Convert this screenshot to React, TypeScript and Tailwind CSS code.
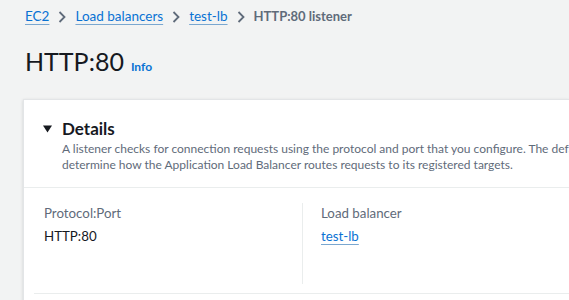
import React from "react";

const font = { fontFamily: "Lato, 'Open Sans', sans-serif" };

function Chevron() {
  return (
    <svg width="10" height="14" viewBox="0 0 10 14" className="mx-[8px]">
      <path d="M2.5 2 L7.5 7 L2.5 12" fill="none" stroke="#5f6b7a" strokeWidth="1.8" />
    </svg>
  );
}

export default function App() {
  return (
    <div className="w-[569px] h-[300px] overflow-hidden bg-[#f2f3f3] text-[#16191f]" style={font}>
      <div className="flex items-center pl-[25px] pt-[7px] h-[26px] text-[13.5px]">
        <a className="text-[#0972d3] underline decoration-[#7aa7d0] underline-offset-[3px]">EC2</a>
        <Chevron />
        <a className="text-[#0972d3] underline decoration-[#7aa7d0] underline-offset-[3px]">Load balancers</a>
        <Chevron />
        <a className="text-[#0972d3] underline decoration-[#7aa7d0] underline-offset-[3px]">test-lb</a>
        <Chevron />
        <span className="text-[#5f6b7a] font-bold text-[13px]">HTTP:80 listener</span>
      </div>
      <div className="flex items-baseline pl-[25px] mt-[17px] h-[36px]">
        <h1 className="text-[25px] leading-[36px] text-[#16191f]">HTTP:80</h1>
        <span className="ml-[7px] text-[12px] font-bold text-[#0972d3]">Info</span>
      </div>
      <div className="ml-[23px] mt-[20px] bg-white border-l border-t border-[#e3e5e7] shadow-[0_1px_3px_rgba(0,28,36,0.15)] h-[300px]">
        <div className="pl-[38px] pt-[18px] pb-[14px] border-b border-[#eaeded]">
          <div className="flex items-center">
            <svg width="9" height="8" viewBox="0 0 9 8" className="-ml-[19px] mr-[10px]">
              <path d="M0 0.5 L9 0.5 L4.5 7.5 Z" fill="#16191f" />
            </svg>
            <span className="text-[17px] font-bold leading-[22px]">Details</span>
          </div>
          <p className="text-[12px] leading-[16px] text-[#5f6b7a] whitespace-nowrap mt-[1px]">
            A listener checks for connection requests using the protocol and port that you configure. The default action and any rules that you define
            <br />
            determine how the Application Load Balancer routes requests to its registered targets.
          </p>
        </div>
        <div className="flex pt-[15px] pb-[9px] ml-[10px] border-b border-[#eaeded]">
          <div className="w-[269px] pl-[10px] h-[81px] border-r border-[#eaeded]">
            <div className="text-[13.3px] text-[#5f6b7a] leading-[20px]">Protocol:Port</div>
            <div className="text-[13.3px] text-[#16191f] leading-[20px] mt-[3px]">HTTP:80</div>
          </div>
          <div className="pl-[18px]">
            <div className="text-[13.3px] text-[#5f6b7a] leading-[20px]">Load balancer</div>
            <a className="text-[13.3px] text-[#0972d3] leading-[20px] mt-[3px] inline-block underline decoration-[#7aa7d0] underline-offset-[3px]">test-lb</a>
          </div>
        </div>
      </div>
    </div>
  );
}
